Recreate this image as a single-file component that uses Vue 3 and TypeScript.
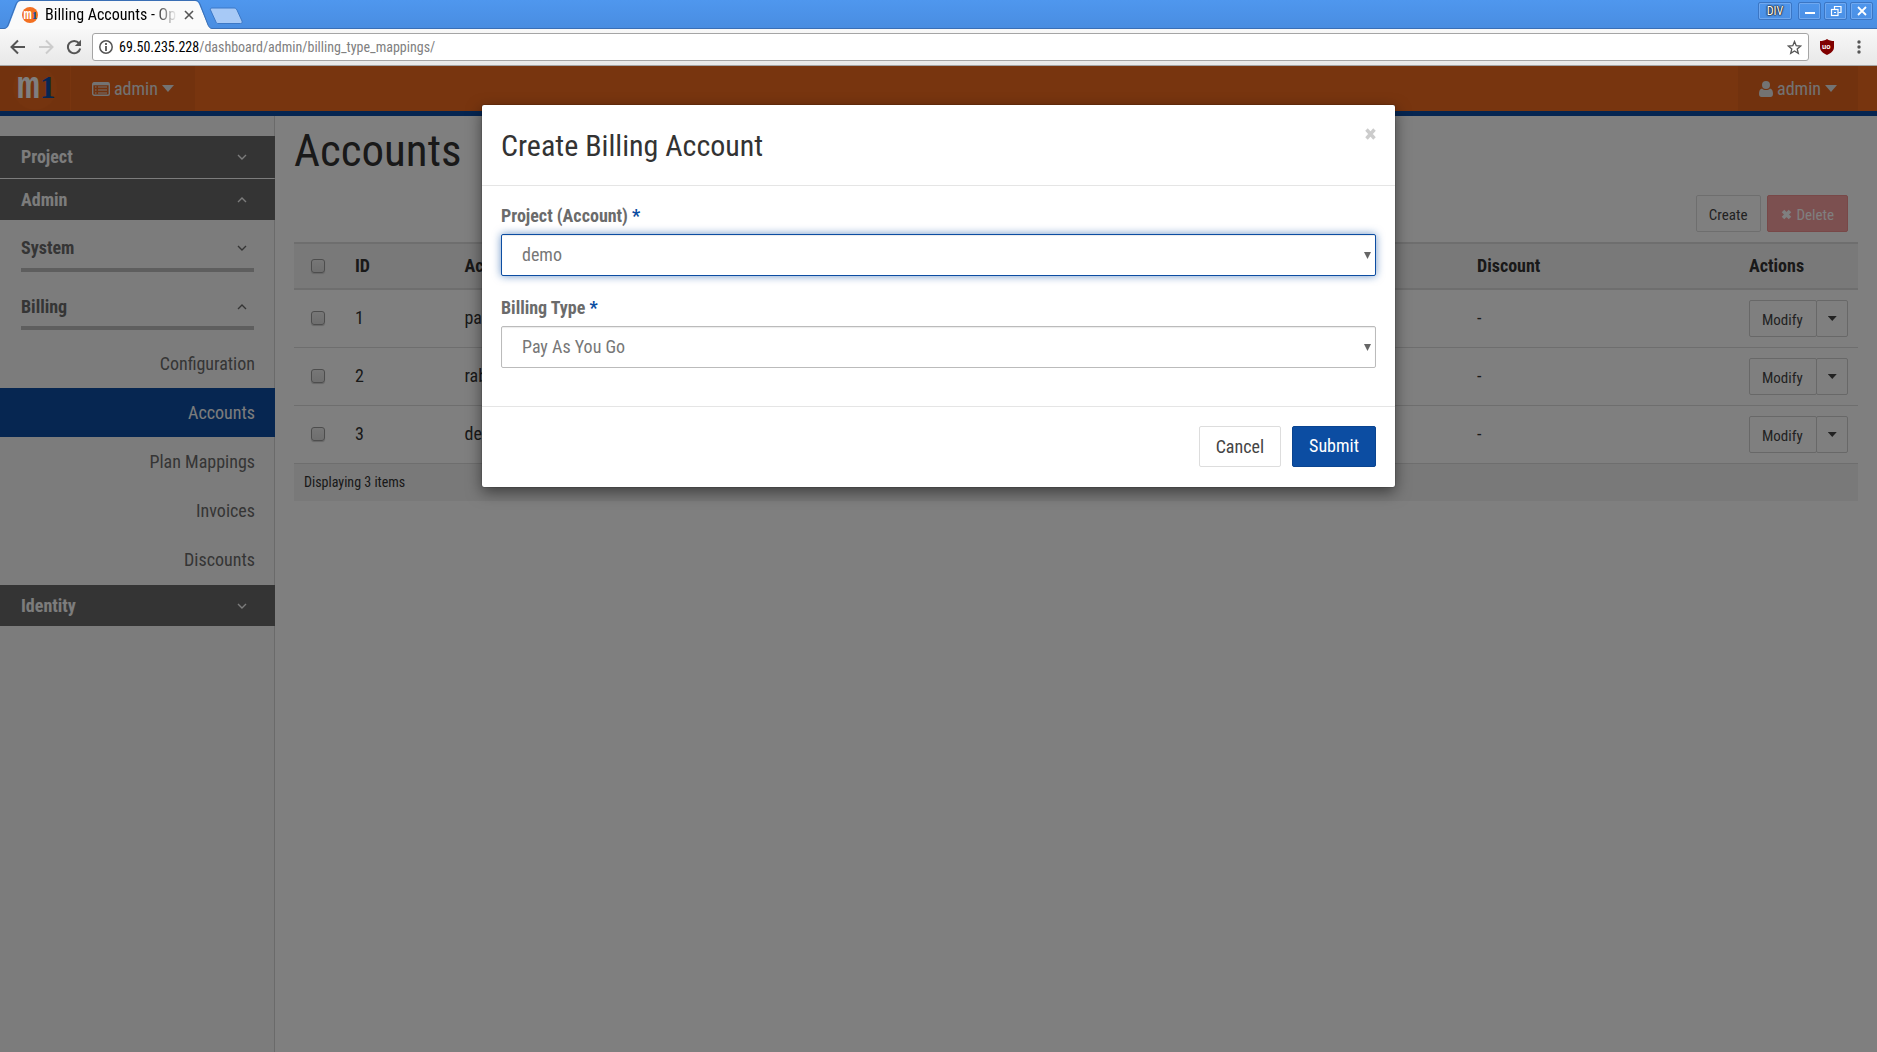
<script setup lang="ts">
import { ref } from 'vue'

interface Row {
  id: number
  account: string
  discount: string
}

const rows: Row[] = [
  { id: 1, account: 'pa', discount: '-' },
  { id: 2, account: 'rab', discount: '-' },
  { id: 3, account: 'demo', discount: '-' },
]
const links = ['Configuration', 'Accounts', 'Plan Mappings', 'Invoices', 'Discounts']
const active = ref('Accounts')
const project = ref('demo')
const billingType = ref('Pay As You Go')
</script>

<template>
  <div class="window">
    <div class="tabstrip">
      <div class="tab">
        <svg class="tab-shape" width="212" height="29" viewBox="0 0 212 29">
          <path d="M0 28.500H5C7 28.500 8 27 9 25L17 4C18 2 19 1 21 1H195C197 1 198 2 199 4L208 25C209 27 210 28.500 212 28.500V29H0Z" fill="#fafafa" />
          <path d="M0 28.500H4C6 28.500 7 27 8 25L16 4C17 2 18 .5 20 .5H196C198 .5 199 2 200 4L208 25C209 27 210 28.500 212 28.500" fill="none" stroke="#3a6fb5" />
        </svg>
        <svg class="favicon" width="16" height="16" viewBox="0 0 44 44">
          <circle cx="22" cy="22" r="22" fill="#f37021" />
          <text x="4" y="32" font-family="Liberation Mono" font-weight="bold" font-size="38" fill="#fff">m</text>
          <text x="27" y="32" font-family="Liberation Serif" font-weight="bold" font-size="31" fill="#0c4da2">1</text>
        </svg>
        <span class="tab-title">Billing Accounts - Op</span>
        <button class="tab-close" aria-label="Close tab">
          <svg width="10" height="10" viewBox="0 0 10 10"><path d="M1 1L9 9M9 1L1 9" stroke="#555" stroke-width="1.600" /></svg>
        </button>
      </div>
      <button class="newtab" aria-label="New tab">
        <svg width="36" height="18" viewBox="0 0 36 18">
          <path d="M3 1H25C26.500 1 27 1.500 28 3L33 14C33.500 15.500 33 16.500 31.500 16.500H9C8 16.500 7.500 16 7 15L1.500 3C1 2 1.500 1 3 1Z" fill="#a7c9f6" stroke="#3c78c6" />
        </svg>
      </button>
      <div class="win-buttons">
        <button class="win div-button">DIV</button>
        <button class="win" aria-label="Minimize"><svg width="12" height="12" viewBox="0 0 12 12"><path d="M1 8H11" stroke="#fff" stroke-width="2" /></svg></button>
        <button class="win" aria-label="Restore">
          <svg width="12" height="12" viewBox="0 0 12 12" fill="none" stroke="#fff" stroke-width="1.200"><path d="M4.500 4V1.500H11V7.500H8.500" /><rect x="1.500" y="4.500" width="6.500" height="6" /><path d="M4 7.500H6" /></svg>
        </button>
        <button class="win" aria-label="Close"><svg width="12" height="12" viewBox="0 0 12 12"><path d="M2 2L10 10M10 2L2 10" stroke="#fff" stroke-width="1.800" /></svg></button>
      </div>
    </div>

    <div class="toolbar">
      <button class="nav" aria-label="Back">
        <svg width="16" height="16" viewBox="0 0 16 16" fill="none" stroke="#555" stroke-width="2"><path d="M15 8H2M8 1.500L1.500 8L8 14.500" /></svg>
      </button>
      <button class="nav" aria-label="Forward">
        <svg width="16" height="16" viewBox="0 0 16 16" fill="none" stroke="#ccc" stroke-width="2"><path d="M1 8H14M8 1.500L14.500 8L8 14.500" /></svg>
      </button>
      <button class="nav" aria-label="Reload">
        <svg width="16" height="16" viewBox="0 0 16 16"><path d="M13 4.200A6.200 6.200 0 1 0 14.200 9.500" fill="none" stroke="#555" stroke-width="2" /><path d="M15 .8V7H8.800Z" fill="#555" /></svg>
      </button>
      <div class="omnibox">
        <svg width="14" height="14" viewBox="0 0 14 14"><circle cx="7" cy="7" r="6.200" fill="none" stroke="#555" stroke-width="1.500" /><path d="M7 6V11M7 3V5" stroke="#555" stroke-width="1.800" /></svg>
        <span class="url"><b>69.50.235.228</b>/dashboard/admin/billing_type_mappings/</span>
        <svg width="15" height="15" viewBox="0 0 15 15"><path d="M7.500 1.500L9.200 5.700L13.700 6L10.200 8.900L11.300 13.300L7.500 10.900L3.700 13.300L4.800 8.900L1.300 6L5.800 5.700Z" fill="none" stroke="#555" stroke-width="1.300" /></svg>
      </div>
      <svg class="shield" width="14" height="16" viewBox="0 0 14 16">
        <path d="M7 0C5 1.500 2.500 2 0 2V8C0 12 3 14 7 16C11 14 14 12 14 8V2C11.500 2 9 1.500 7 0Z" fill="#800000" />
        <text x="2" y="10" font-family="Liberation Sans" font-weight="bold" font-size="7" fill="#fff">uo</text>
      </svg>
      <svg class="dots" width="4" height="14" viewBox="0 0 4 14" fill="#555"><circle cx="2" cy="2" r="1.700" /><circle cx="2" cy="7" r="1.700" /><circle cx="2" cy="12" r="1.700" /></svg>
    </div>

    <div class="page">
      <header class="topbar">
        <a class="brand" href="#" aria-label="Home">
          <svg width="44" height="44" viewBox="0 0 44 44">
            <circle cx="22" cy="22" r="22" fill="#ea681e" />
            <text x="4" y="32" font-family="Liberation Mono" font-weight="bold" font-size="38" fill="#fff">m</text>
            <text x="27" y="32" font-family="Liberation Serif" font-weight="bold" font-size="31" fill="#0c4da2">1</text>
          </svg>
        </a>
        <a class="menu" href="#">
          <svg width="18" height="14" viewBox="0 0 18 14"><rect x=".7" y=".7" width="16.600" height="12.600" rx="1.500" fill="none" stroke="#e6e6e6" stroke-width="1.400" /><path d="M1 2H17" stroke="#e6e6e6" stroke-width="2.500" /><path d="M3 5H4.500M3 8H4.500M3 11H4.500M6 5H15M6 8H15M6 11H15" stroke="#e6e6e6" stroke-width="1.200" /></svg>
          <span>admin</span><i class="caret"></i>
        </a>
        <a class="menu user" href="#">
          <svg width="14" height="16" viewBox="0 0 14 16" fill="#e6e6e6"><circle cx="7" cy="4" r="4" /><path d="M3 7.500C5 9.500 9 9.500 11 7.500C13.500 8 14 10.500 14 13C14 15 13 16 11.500 16H2.500C1 16 0 15 0 13C0 10.500 .5 8 3 7.500Z" /></svg>
          <span>admin</span><i class="caret"></i>
        </a>
      </header>

      <div class="body">
        <nav class="sidebar">
          <a class="group" href="#">Project<svg class="chev" width="10" height="6" viewBox="0 0 10 6"><path d="M1 1L5 5L9 1" /></svg></a>
          <a class="group" href="#">Admin<svg class="chev" width="10" height="6" viewBox="0 0 10 6"><path d="M1 5L5 1L9 5" /></svg></a>
          <a class="sub" href="#">System<svg class="chev" width="10" height="6" viewBox="0 0 10 6"><path d="M1 1L5 5L9 1" /></svg></a>
          <a class="sub" href="#">Billing<svg class="chev" width="10" height="6" viewBox="0 0 10 6"><path d="M1 5L5 1L9 5" /></svg></a>
          <ul class="links">
            <li v-for="l in links" :key="l"><a href="#" :class="{ active: l === active }" @click.prevent="active = l">{{ l }}</a></li>
          </ul>
          <a class="group" href="#">Identity<svg class="chev" width="10" height="6" viewBox="0 0 10 6"><path d="M1 1L5 5L9 1" /></svg></a>
        </nav>

        <main class="main">
          <h1>Accounts</h1>
          <div class="actions">
            <button class="btn small">Create</button>
            <button class="btn small danger"><svg width="11" height="11" viewBox="0 0 11 11"><path d="M2 2L9 9M9 2L2 9" stroke="#fff" stroke-width="3.600" /></svg>Delete</button>
          </div>
          <table>
            <colgroup><col class="c-check" /><col class="c-id" /><col /><col class="c-discount" /><col class="c-actions" /></colgroup>
            <thead>
              <tr>
                <th class="check"><input type="checkbox" aria-label="Select all" /></th>
                <th>ID</th><th>Account</th><th>Discount</th><th>Actions</th>
              </tr>
            </thead>
            <tbody>
              <tr v-for="r in rows" :key="r.id">
                <td class="check"><input type="checkbox" :aria-label="'Select ' + r.id" /></td>
                <td>{{ r.id }}</td>
                <td>{{ r.account }}</td>
                <td>{{ r.discount }}</td>
                <td class="row-actions">
                  <div class="split">
                    <button class="btn small">Modify</button><button class="btn small toggle" aria-label="More actions"><i class="caret"></i></button>
                  </div>
                </td>
              </tr>
            </tbody>
            <tfoot><tr><td colspan="5">Displaying 3 items</td></tr></tfoot>
          </table>
        </main>
      </div>

      <div class="backdrop">
        <form class="modal" role="dialog" aria-labelledby="modal-title" @submit.prevent>
          <div class="modal-head">
            <h3 id="modal-title">Create Billing Account</h3>
            <button type="button" class="close" aria-label="Close"><svg width="11" height="12" viewBox="0 0 11 12"><path d="M1.500 1.500L9.500 10.500M9.500 1.500L1.500 10.500" stroke="#ccc" stroke-width="3.400" /></svg></button>
          </div>
          <div class="modal-body">
            <label for="project">Project (Account) <span class="req">*</span></label>
            <div class="select focus"><select id="project" v-model="project"><option>demo</option></select></div>
            <label for="type">Billing Type <span class="req">*</span></label>
            <div class="select"><select id="type" v-model="billingType"><option>Pay As You Go</option></select></div>
          </div>
          <div class="modal-foot">
            <button type="button" class="btn">Cancel</button>
            <button type="submit" class="btn primary">Submit</button>
          </div>
        </form>
      </div>
    </div>
  </div>
</template>

<style>
body {
  margin: 0;
}
</style>

<style scoped>
* {
  box-sizing: border-box;
}
.window {
  min-height: 100vh;
  display: flex;
  flex-direction: column;
  font-family: 'Roboto Condensed', 'Liberation Sans Narrow', Roboto, sans-serif;
  font-size: 18px;
  line-height: 26px;
  color: #333;
}
button, select, input {
  font: inherit;
  color: inherit;
  margin: 0;
}
button {
  padding: 0;
  border: 0;
  background: none;
}
a {
  color: inherit;
  text-decoration: none;
}
svg {
  flex: none;
  display: block;
}

/* Browser frame */
.tabstrip {
  height: 29px;
  display: flex;
  background: linear-gradient(#4f97ee, #498de1);
  border-bottom: 1px solid #3a6fb5;
}
.tab {
  position: relative;
  width: 212px;
  height: 29px;
  padding-left: 22px;
  display: flex;
  align-items: center;
  font-size: 16px;
  color: #000;
}
.tab-shape {
  position: absolute;
  left: 0;
  top: 0;
}
.favicon {
  position: relative;
}
.tab-title {
  position: relative;
  width: 132px;
  margin-left: 7px;
  overflow: hidden;
  white-space: nowrap;
  -webkit-mask-image: linear-gradient(90deg, #000 108px, transparent 132px);
  mask-image: linear-gradient(90deg, #000 108px, transparent 132px);
}
.tab-close {
  position: relative;
  margin-left: 7px;
}
.newtab {
  align-self: flex-start;
  padding-top: 7px;
  margin-left: -3px;
}
.win-buttons {
  display: flex;
  gap: 3px;
  margin-left: auto;
  padding: 2px 4px 0 0;
}
.win {
  width: 23px;
  height: 18px;
  display: flex;
  align-items: center;
  justify-content: center;
  border: 1px solid #3b76c4;
  border-radius: 2px;
  box-shadow: inset 0 0 0 1px #6fa8f0;
}
.div-button {
  width: 34px;
  margin-right: 3px;
  font-size: 12px;
  line-height: 16px;
  color: #fff;
  text-shadow: 0 0 1px #222, 0 0 1px #222, 0 0 2px #222, 0 0 2px #222;
}
.toolbar {
  height: 37px;
  display: flex;
  align-items: center;
  padding: 0 16px 0 10px;
  background: linear-gradient(#f8f8f8, #e8e8e8);
  border-bottom: 1px solid #a5a5a5;
}
.nav {
  width: 28px;
}
.omnibox {
  flex: 1;
  height: 28px;
  display: flex;
  align-items: center;
  margin: 0 11px 0 -2px;
  padding: 0 6px;
  background: #fff;
  border: 1px solid #a5a5a5;
  border-radius: 3px;
}
.url {
  flex: 1;
  margin-left: 6px;
  font-size: 14px;
  color: #808080;
}
.url b {
  font-weight: 400;
  color: #000;
}
.dots {
  margin-left: 23px;
}

/* Application */
.page {
  position: relative;
  flex: 1;
  display: flex;
  flex-direction: column;
  background: #fff;
}
.topbar {
  height: 50px;
  display: flex;
  background: #f06a1e;
  border-bottom: 5px solid #0a4aa2;
  color: #e6e6e6;
}
.brand {
  width: 71px;
  padding-left: 13px;
  background: #e4651d;
  border-right: 1px solid #f06a1e;
}
.menu {
  display: flex;
  align-items: center;
  gap: 4px;
  padding: 0 21px;
  background: #e4651d;
}
.user {
  margin: 0 19px 0 auto;
}
.caret {
  width: 12px;
  height: 7px;
  background: currentColor;
  clip-path: polygon(0 0, 100% 0, 50% 100%);
}
.body {
  flex: 1;
  display: flex;
}
.sidebar {
  flex: none;
  width: 275px;
  padding-top: 20px;
  background: #f9f9f9;
  border-right: 1px solid #d5d5d5;
}
.group, .sub {
  display: flex;
  align-items: center;
  justify-content: space-between;
  font-weight: 700;
}
.group {
  height: 41px;
  margin-right: -1px;
  padding: 0 28px 0 21px;
  background: #686868;
  color: #f9f9f9;
}
.group + .group {
  margin-top: 1px;
}
.group:first-child {
  height: 42px;
}
.sub {
  height: 52px;
  margin: 0 20px 0 21px;
  padding: 8px 7px 0 0;
  border-bottom: 4px solid #bdbdbd;
  color: #6b6b6b;
}
.sub + .sub {
  height: 58px;
  padding-top: 16px;
}
.chev {
  fill: none;
  stroke: currentColor;
  stroke-width: 1.400;
}
.links {
  list-style: none;
  margin: 9px -1px 0 0;
  padding: 0 0 1px;
}
.links a {
  display: block;
  height: 49px;
  line-height: 49px;
  padding-right: 20px;
  text-align: right;
  color: #6b6b6b;
}
.links .active {
  background: #0c4da2;
  color: #f9f9f9;
}
.main {
  flex: 1;
  padding: 0 19px;
}
h1 {
  margin: 10px 0 0;
  font-size: 45px;
  line-height: 50px;
  font-weight: 400;
}
.actions {
  display: flex;
  justify-content: flex-end;
  gap: 6px;
  padding: 19px 10px 10px 0;
}
.btn {
  height: 41px;
  padding: 0 16px;
  border: 1px solid #ddd;
  border-radius: 2px;
  background: #fff;
  color: #444;
}
.small {
  height: 37px;
  padding: 2px 13px 0 12px;
  font-size: 15px;
  display: flex;
  align-items: center;
  gap: 4px;
}
.danger {
  padding: 2px 13px 0;
  background: #f9a0a0;
  border-color: #f09090;
  color: #fff;
}
.primary {
  padding-bottom: 2px;
  background: #0c4da2;
  border-color: #0a4490;
  color: #fff;
}
table {
  width: 100%;
  table-layout: fixed;
  border-collapse: separate;
  border-spacing: 0;
}
.c-check {
  width: 51px;
}
.c-id {
  width: 7%;
}
.c-discount {
  width: 272px;
}
.c-actions {
  width: 119px;
}
th {
  height: 48px;
  padding: 0 10px;
  text-align: left;
  background: #f2f2f2;
  border-top: 2px solid #ddd;
  border-bottom: 2px solid #ddd;
}
td {
  height: 58px;
  padding: 0 10px 2px;
  border-bottom: 1px solid #ddd;
}
.row-actions {
  padding-bottom: 0;
}
tfoot td {
  height: 37px;
  background: #f2f2f2;
  border: 0;
  font-size: 14px;
}
th.check {
  padding: 0 0 0 17px;
}
td.check {
  padding: 0 0 2px 17px;
}
input[type='checkbox'] {
  appearance: none;
  display: block;
  width: 14px;
  height: 14px;
  border: 1px solid #9a9a9a;
  border-radius: 3px;
  background: linear-gradient(#eee, #ddd);
  box-shadow: 0 1px 1px #ccc;
}
.split {
  display: flex;
}
.split .btn {
  border-color: #d0d0d0;
}
.split .toggle {
  width: 32px;
  margin-left: -1px;
  padding: 0 11px;
}
.toggle .caret {
  flex: none;
  width: 9px;
  height: 5px;
}

/* Dialog */
.backdrop {
  position: absolute;
  inset: 0;
  padding-top: 39px;
  background: rgba(0, 0, 0, 0.5);
}
.modal {
  width: 913px;
  max-width: 96%;
  margin: 0 auto;
  background: #fff;
  border-radius: 2px;
  box-shadow: 0 5px 15px rgba(0, 0, 0, 0.5), 0 0 1px #000;
}
.modal-head {
  display: flex;
  justify-content: space-between;
  align-items: flex-start;
  height: 81px;
  padding: 21px 19px 0;
  border-bottom: 1px solid #e5e5e5;
}
h3 {
  margin: 0;
  font-size: 30px;
  line-height: 40px;
  font-weight: 400;
}
.close {
  padding: 2px 0;
}
.modal-body {
  padding: 17px 19px 38px;
}
label {
  display: block;
  margin-bottom: 5px;
  font-weight: 700;
  color: #6b6b6b;
}
.req {
  color: #0c4da2;
}
.select {
  position: relative;
  margin-bottom: 19px;
}
.select:last-child {
  margin-bottom: 0;
}
.select::after {
  content: '';
  position: absolute;
  right: 5px;
  top: 18px;
  width: 7px;
  height: 7px;
  background: #666;
  clip-path: polygon(0 0, 100% 0, 50% 100%);
  pointer-events: none;
}
select {
  appearance: none;
  display: block;
  width: 100%;
  height: 42px;
  padding: 0 20px;
  border: 1px solid #bbb;
  border-radius: 2px;
  background: #fff;
  box-shadow: inset 0 1px 1px rgba(0, 0, 0, 0.08);
  color: #777;
  outline: none;
}
.focus select {
  border-color: #0c4da2;
  box-shadow: inset 0 1px 1px rgba(0, 0, 0, 0.08), 0 0 8px rgba(12, 77, 162, 0.6);
}
.modal-foot {
  display: flex;
  justify-content: flex-end;
  gap: 11px;
  padding: 19px 19px 20px;
  border-top: 1px solid #e5e5e5;
}
</style>
